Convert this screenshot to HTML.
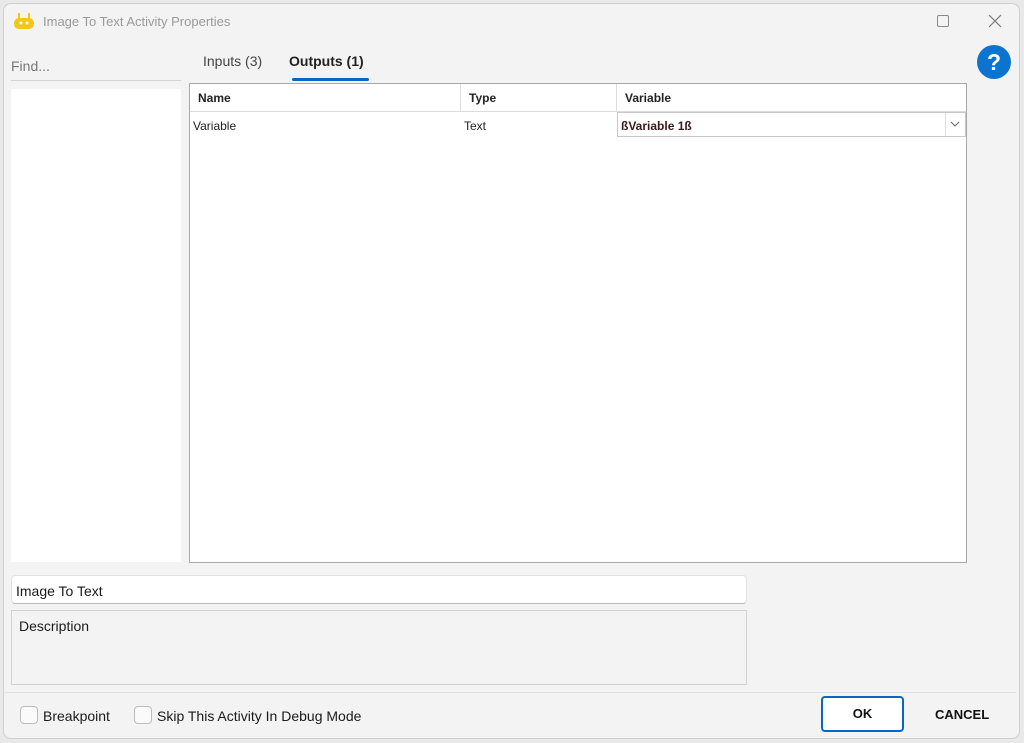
<!DOCTYPE html>
<html><head><style>
*{margin:0;padding:0;box-sizing:border-box}
body{width:1024px;height:743px;background:#e9e9e9;font-family:"Liberation Sans",sans-serif;position:relative;overflow:hidden}
.win{position:absolute;left:3px;top:3px;width:1017px;height:736px;background:#f3f3f3;border:1px solid #cfcfcf;border-radius:8px}
.a{position:absolute}
.t{font-size:14px;color:#1a1a1a}
</style></head><body>
<div class="win"></div>
<!-- icon -->
<svg class="a" style="left:13px;top:12px" width="22" height="18"><rect x="1" y="6" width="20" height="11" rx="5" fill="#f5c518"/><rect x="5" y="1" width="2" height="6" fill="#f5c518"/><rect x="15" y="1" width="2" height="6" fill="#f5c518"/><circle cx="8" cy="11" r="1.5" fill="#fff"/><circle cx="14" cy="11" r="1.5" fill="#fff"/></svg>
<div class="a" style="left:43px;top:14px;font-size:13px;color:#9a9a9a">Image To Text Activity Properties</div>
<div class="a" style="left:937px;top:15px;width:12px;height:12px;border:1px solid #8a8a8a;border-radius:2px"></div>
<svg class="a" style="left:988px;top:14px" width="14" height="14"><path d="M1 1L13 13M13 1L1 13" stroke="#777" stroke-width="1.2"/></svg>
<div class="a" style="left:977px;top:45px;width:34px;height:34px;border-radius:50%;background:#0a74d0;color:#fff;font-weight:bold;font-size:23px;text-align:center;line-height:34px">?</div>
<div class="a" style="left:11px;top:58px;font-size:14px;color:#777">Find...</div>
<div class="a" style="left:11px;top:80px;width:170px;height:1px;background:#d4d4d4"></div>
<div class="a" style="left:11px;top:89px;width:170px;height:473px;background:#fff"></div>
<div class="a t" style="left:203px;top:53px;color:#444">Inputs (3)</div>
<div class="a t" style="left:289px;top:53px;font-weight:bold;color:#222">Outputs (1)</div>
<div class="a" style="left:292px;top:78px;width:77px;height:3px;background:#0a66c2;border-radius:2px"></div>
<div class="a" style="left:189px;top:83px;width:778px;height:480px;background:#fff;border:1px solid #a8a8a8"></div>
<div class="a" style="left:190px;top:111px;width:776px;height:1px;background:#ddd"></div>
<div class="a" style="left:460px;top:84px;width:1px;height:27px;background:#ddd"></div>
<div class="a" style="left:616px;top:84px;width:1px;height:27px;background:#ddd"></div>
<div class="a" style="left:198px;top:91px;font-size:12px;font-weight:bold;color:#222">Name</div>
<div class="a" style="left:469px;top:91px;font-size:12px;font-weight:bold;color:#222">Type</div>
<div class="a" style="left:625px;top:91px;font-size:12px;font-weight:bold;color:#222">Variable</div>
<div class="a" style="left:193px;top:119px;font-size:12px;color:#222">Variable</div>
<div class="a" style="left:464px;top:119px;font-size:12px;color:#222">Text</div>
<div class="a" style="left:617px;top:112px;width:349px;height:25px;border:1px solid #c8c8c8;background:#fff"></div>
<div class="a" style="left:945px;top:113px;width:1px;height:23px;background:#ddd"></div>
<svg class="a" style="left:950px;top:120px" width="10" height="8"><path d="M1 2L5 6L9 2" fill="none" stroke="#666"/></svg>
<div class="a" style="left:621px;top:119px;font-size:12px;font-weight:bold;color:#3a1a1a">ßVariable 1ß</div>
<div class="a" style="left:11px;top:575px;width:736px;height:29px;background:#fff;border:1px solid #e3e3e3;border-bottom:1px solid #bbb;border-radius:4px"></div>
<div class="a t" style="left:16px;top:583px">Image To Text</div>
<div class="a" style="left:11px;top:610px;width:736px;height:75px;border:1px solid #d2d2d2"></div>
<div class="a t" style="left:19px;top:618px">Description</div>
<div class="a" style="left:5px;top:692px;width:1011px;height:1px;background:#e0e0e0"></div>
<div class="a" style="left:20px;top:706px;width:18px;height:18px;border:1px solid #bbb;border-radius:4px;background:#fafafa"></div>
<div class="a t" style="left:43px;top:708px">Breakpoint</div>
<div class="a" style="left:134px;top:706px;width:18px;height:18px;border:1px solid #bbb;border-radius:4px;background:#fafafa"></div>
<div class="a t" style="left:157px;top:708px">Skip This Activity In Debug Mode</div>
<div class="a" style="left:821px;top:696px;width:83px;height:36px;border:2px solid #0a66c2;border-radius:4px;background:#fff;font-size:13px;font-weight:bold;text-align:center;line-height:32px;color:#111">OK</div>
<div class="a" style="left:935px;top:707px;font-size:13px;font-weight:bold;color:#111">CANCEL</div>
</body></html>
